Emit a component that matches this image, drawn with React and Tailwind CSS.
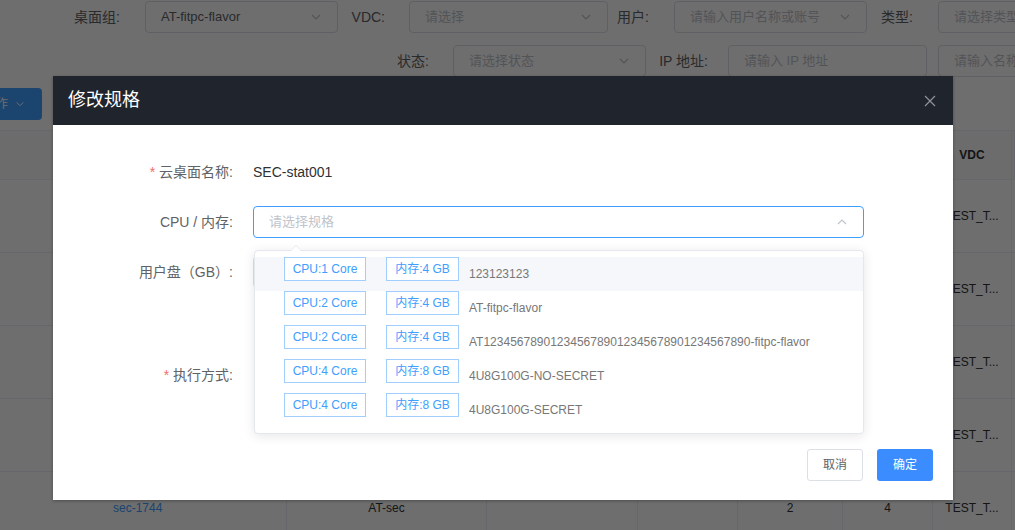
import React from 'react';

const flavors = [
  { cpu: 'CPU:1 Core', mem: '内存:4 GB', name: '123123123' },
  { cpu: 'CPU:2 Core', mem: '内存:4 GB', name: 'AT-fitpc-flavor' },
  { cpu: 'CPU:2 Core', mem: '内存:4 GB', name: 'AT1234567890123456789012345678901234567890-fitpc-flavor' },
  { cpu: 'CPU:4 Core', mem: '内存:8 GB', name: '4U8G100G-NO-SECRET' },
  { cpu: 'CPU:4 Core', mem: '内存:8 GB', name: '4U8G100G-SECRET' },
];

const rows = [
  { name: 'sec-1740', group: 'AT-sec', cpu: '2', mem: '4' },
  { name: 'sec-1741', group: 'AT-sec', cpu: '2', mem: '4' },
  { name: 'sec-1742', group: 'AT-sec', cpu: '2', mem: '4' },
  { name: 'sec-1743', group: 'AT-sec', cpu: '2', mem: '4' },
  { name: 'sec-1744', group: 'AT-sec', cpu: '2', mem: '4' },
];

function Chevron({ up = false, className = '' }) {
  return (
    <svg width="12" height="12" viewBox="0 0 12 12" className={className}>
      <path
        d={up ? 'M2 8 L6 4 L10 8' : 'M2 4 L6 8 L10 4'}
        fill="none"
        stroke="currentColor"
        strokeWidth="1.2"
      />
    </svg>
  );
}

function FilterBox({ className, value, placeholder, arrow }) {
  return (
    <div
      className={`flex h-8 shrink-0 items-center justify-between rounded-[4px] border border-[#dcdfe6] bg-white px-[15px] text-[13px] whitespace-nowrap ${className}`}
    >
      {value ? (
        <span className="text-[#606266]">{value}</span>
      ) : (
        <span className="text-[#c0c4cc]">{placeholder}</span>
      )}
      {arrow && <Chevron className="shrink-0 text-[#c0c4cc]" />}
    </div>
  );
}

function FormLabel({ required, children }) {
  return (
    <div className="w-[200px] shrink-0 pr-[20px] text-right text-[14px] leading-[32px] text-[#606266]">
      {required && <span className="mr-[4px] text-[#f56c6c]">*</span>}
      {children}
    </div>
  );
}

function App() {
  return (
    <div className="relative h-[530px] w-[1015px] overflow-hidden bg-white font-['Liberation_Sans','Noto_Sans_CJK_SC',sans-serif]">
      {/* Filters */}
      <div className="flex items-center pt-px text-[14px] text-[#606266]">
        <div className="w-[145px] shrink-0 pr-[25px] text-right">桌面组:</div>
        <FilterBox className="w-[193px]" value="AT-fitpc-flavor" arrow />
        <div className="w-[71px] shrink-0 pr-[24px] text-right">VDC:</div>
        <FilterBox className="w-[199px]" placeholder="请选择" arrow />
        <div className="w-[66px] shrink-0 pr-[25px] text-right">用户:</div>
        <FilterBox className="w-[193px]" placeholder="请输入用户名称或账号" arrow />
        <div className="w-[71px] shrink-0 pr-[25px] text-right">类型:</div>
        <FilterBox className="w-[120px]" placeholder="请选择类型" />
      </div>
      <div className="mt-[12px] flex items-center text-[14px] text-[#606266]">
        <div className="w-[453px] shrink-0 pr-[24px] text-right">状态:</div>
        <FilterBox className="w-[193px]" placeholder="请选择状态" arrow />
        <div className="w-[82px] shrink-0 pr-[20px] text-right">IP 地址:</div>
        <FilterBox className="w-[199px]" placeholder="请输入 IP 地址" />
        <div className="w-[11px] shrink-0" />
        <FilterBox className="w-[120px]" placeholder="请输入名称" />
      </div>

      {/* Toolbar */}
      <div className="mt-[11px] flex">
        <button className="-ml-[55px] flex h-8 items-center rounded-[4px] bg-[#409eff] pl-[15px] pr-[17px] text-[12px] text-white">
          批量操作
          <Chevron className="ml-[7px] h-[10px] w-[10px]" />
        </button>
      </div>

      {/* Table */}
      <div className="mt-[10px] grid grid-cols-[287px_200px_151px_100px_105px_90px_79px_1fr] border-t border-[#ebeef5] text-[12px] text-[#606266]">
        {['名称', '桌面组', 'IP 地址', '状态', 'CPU', '内存(GB)', 'VDC', ''].map((h, i) => (
          <div
            key={i}
            className="flex h-[49px] items-center justify-center border-r border-b border-[#ebeef5] bg-[#fafafa] font-bold text-[#303133]"
          >
            {h}
          </div>
        ))}
        {rows.map((r) => (
          <React.Fragment key={r.name}>
            <div className="flex h-[73px] items-center border-r border-b border-[#ebeef5] pl-[113px] text-[#409eff]">{r.name}</div>
            <div className="flex h-[73px] items-center justify-center border-r border-b border-[#ebeef5] text-[#303133]">{r.group}</div>
            <div className="h-[73px] border-r border-b border-[#ebeef5]" />
            <div className="h-[73px] border-r border-b border-[#ebeef5]" />
            <div className="flex h-[73px] items-center justify-center border-r border-b border-[#ebeef5] text-[#303133]">{r.cpu}</div>
            <div className="flex h-[73px] items-center justify-center border-r border-b border-[#ebeef5] text-[#303133]">{r.mem}</div>
            <div className="flex h-[73px] items-center justify-center border-r border-b border-[#ebeef5] text-[#303133]">TEST_T...</div>
            <div className="h-[73px] border-b border-[#ebeef5]" />
          </React.Fragment>
        ))}
      </div>

      {/* Mask */}
      <div className="absolute inset-0 bg-black/[0.57]" />

      {/* Dialog */}
      <div className="absolute left-[53px] top-[76px] w-[900px] bg-white shadow-[0_1px_3px_rgba(0,0,0,0.3)]">
        <div className="flex h-[49px] items-center justify-between bg-[#20242d] pl-[15px] pr-[17px]">
          <span className="text-[18px] text-white">修改规格</span>
          <svg width="12" height="12" viewBox="0 0 12 12" className="text-[#909399]">
            <path d="M1 1 L11 11 M11 1 L1 11" stroke="currentColor" strokeWidth="1.2" />
          </svg>
        </div>

        <div className="pt-[31px]">
          <div className="flex">
            <FormLabel required>云桌面名称:</FormLabel>
            <div className="text-[14px] leading-[32px] text-[#303133]">SEC-stat001</div>
          </div>

          <div className="mt-[18px] flex">
            <FormLabel>CPU / 内存:</FormLabel>
            <div className="relative z-10 w-[611px]">
              <div className="flex h-8 items-center justify-between rounded-[4px] border border-[#409eff] px-[15px] text-[13px]">
                <span className="text-[#c0c4cc]">请选择规格</span>
                <Chevron up className="text-[#c0c4cc]" />
              </div>

              {/* Dropdown */}
              <div className="absolute left-px top-[44px] w-[610px] rounded-[4px] border border-[#e4e7ed] bg-white py-[6px] shadow-[0_2px_12px_0_rgba(0,0,0,0.1)]">
                <div className="absolute -top-[6px] left-[35px] h-0 w-0 border-x-[6px] border-b-[6px] border-x-transparent border-b-[#e4e7ed]" />
                <div className="absolute -top-[5px] left-[35px] h-0 w-0 border-x-[6px] border-b-[6px] border-x-transparent border-b-white" />
                {flavors.map((f, i) => (
                  <div
                    key={i}
                    className={`flex h-[34px] items-start pl-[29px] ${i === 0 ? 'bg-[#f5f7fa]' : ''}`}
                  >
                    <span className="flex h-[24px] w-[82px] items-center justify-center border border-[#a0cfff] bg-white text-[12px] text-[#409eff]">
                      {f.cpu}
                    </span>
                    <span className="ml-[20px] flex h-[24px] w-[73px] items-center justify-center border border-[#a0cfff] bg-white text-[12px] text-[#409eff]">
                      {f.mem}
                    </span>
                    <span className="ml-[10px] text-[12px] leading-[34px] text-[#777]">{f.name}</span>
                  </div>
                ))}
              </div>
            </div>
          </div>

          <div className="mt-[18px] flex h-[85px]">
            <FormLabel>用户盘（GB）:</FormLabel>
            <div className="h-8 w-[200px] rounded-[4px] border border-[#dcdfe6]" />
          </div>

          <div className="mt-[18px] flex">
            <FormLabel required>执行方式:</FormLabel>
            <div className="h-8 w-[200px]" />
          </div>
        </div>

        <div className="mt-[58px] flex justify-end gap-[14px] pb-[19px] pr-[20px]">
          <button className="h-8 w-[56px] rounded-[3px] border border-[#dcdfe6] bg-white text-[12px] text-[#606266]">取消</button>
          <button className="h-8 w-[56px] rounded-[3px] bg-[#3a8cff] text-[12px] text-white">确定</button>
        </div>
      </div>
    </div>
  );
}

export default App;
